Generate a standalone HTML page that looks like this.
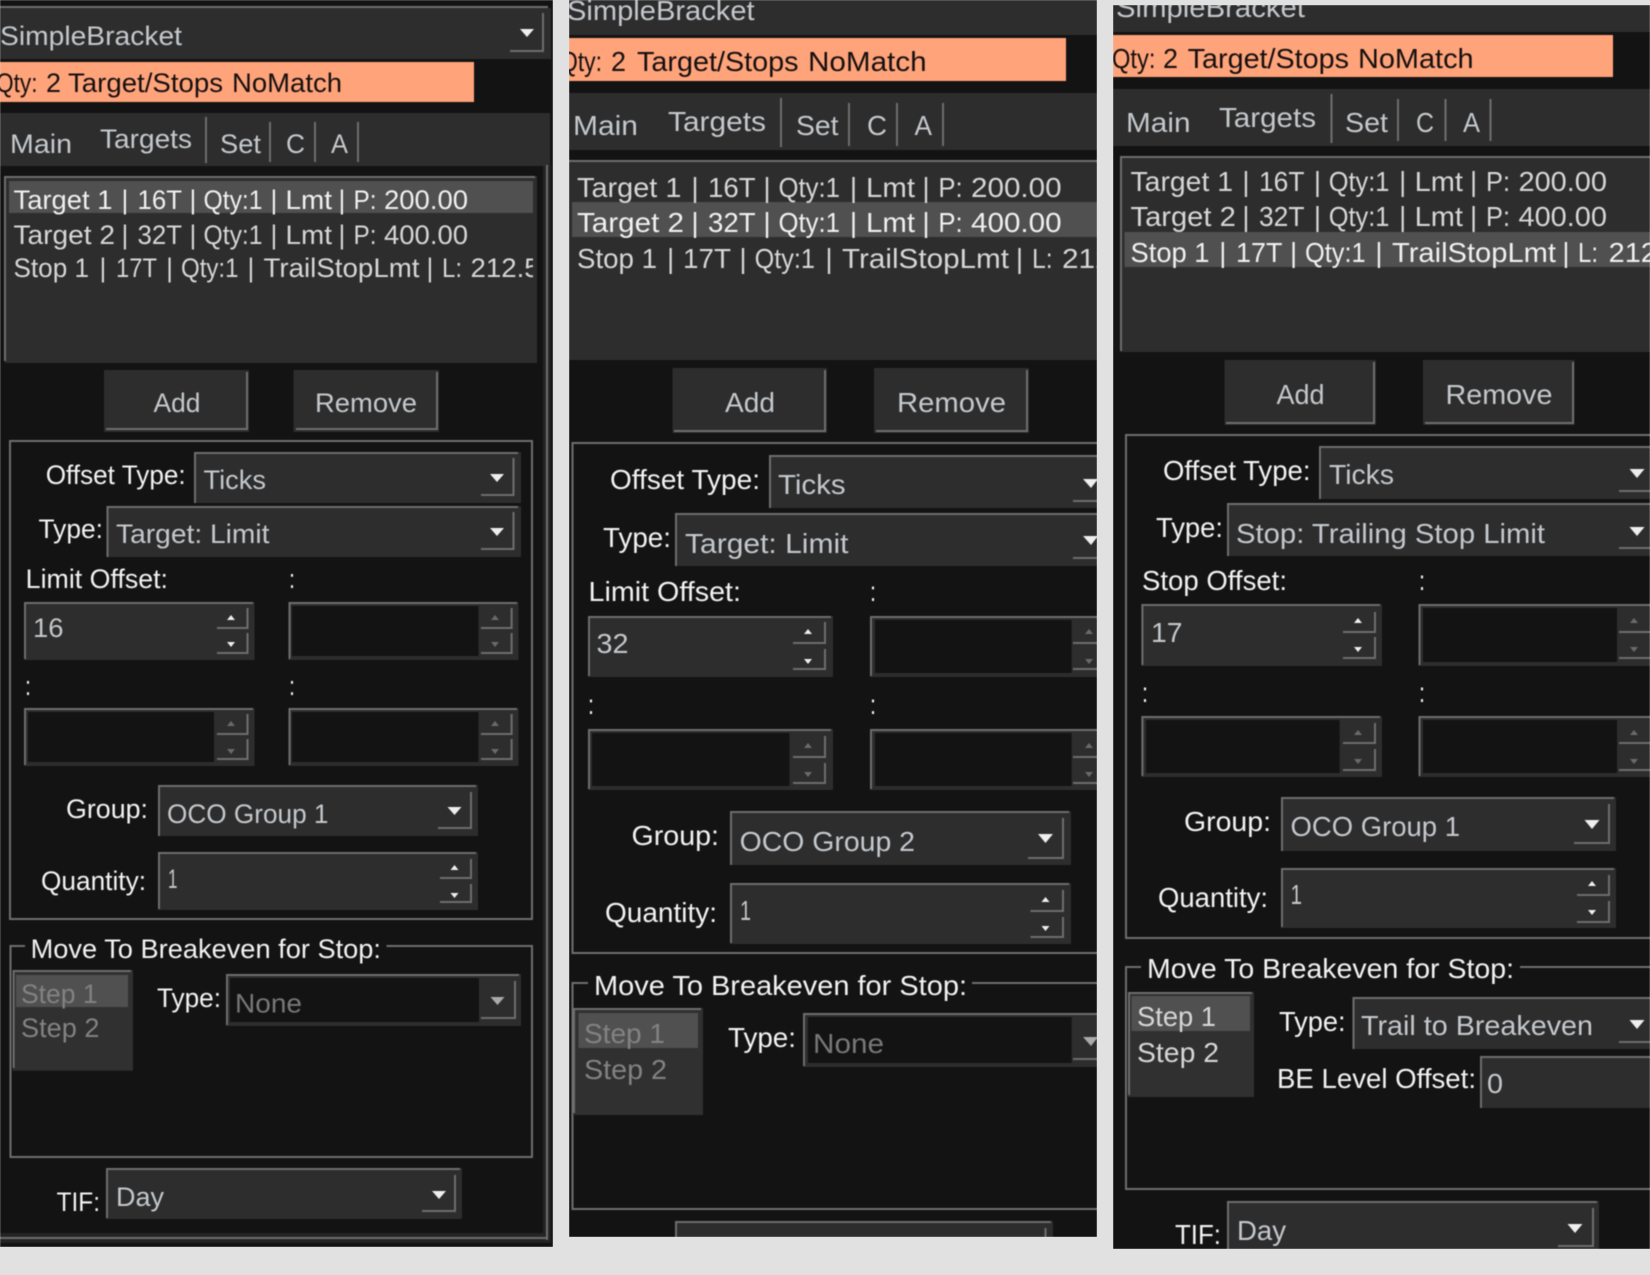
<!DOCTYPE html>
<html><head><meta charset="utf-8"><style>
html,body{margin:0;padding:0;background:#e1e1e1;width:1650px;height:1275px;overflow:hidden}
svg{display:block;position:absolute;left:0;top:0}
text{font-family:"Liberation Sans",sans-serif;fill:#f2f2f2}
.bl{filter:blur(.5px)}
.b{fill:#2d2d2d}.d{fill:#131313}.s{fill:#505050}.o{fill:#ffa37a}
.l{stroke:#6e6e6e;stroke-width:2;fill:none}
.t{fill:#eee}.g{fill:#aaa}.h{fill:#6a6a6a}
.lst text{fill:#d6d6d6}
.lst .e text{fill:#f0f0f0}
.lst .p{text-anchor:middle}
text.k{fill:#151010}
text.m{fill:#c4c8cc}
</style></head><body>
<svg width="1650" height="1275" viewBox="0 0 1650 1275" xmlns="http://www.w3.org/2000/svg">
<defs>
<clipPath id="c1"><rect x="0" y="0" width="553" height="1247"/></clipPath>
<clipPath id="c2"><rect x="569" y="0" width="528" height="1237"/></clipPath>
<clipPath id="c3"><rect x="1113" y="5" width="537" height="1244"/></clipPath>
<clipPath id="r1"><rect x="9" y="176" width="524" height="190"/></clipPath>
</defs>

<!-- PANEL 1 -->
<g clip-path="url(#c1)"><g class="bl" font-size="26.5">
<rect class="d" x="0" y="0" width="553" height="1247"/>
<rect x="543" y="165" width="8" height="1078" fill="#242424"/>
<rect x="0" y="1233" width="551" height="10" fill="#242424"/>
<rect class="d" x="0" y="1233" width="0" height="0"/>
<rect class="b" x="0" y="8" width="551" height="51"/>
<path class="l" d="M0 7H548"/>
<path class="l" d="M510 51H543V13"/><path class="t" d="M520 29H534L527 37Z"/>
<text class="m" x="0" y="45" textLength="182" lengthAdjust="spacingAndGlyphs">SimpleBracket</text>
<rect class="o" x="0" y="62" width="474" height="40"/>
<text class="k" x="-4" y="92" textLength="41.5" lengthAdjust="spacingAndGlyphs">Qty:</text>
<text class="k" x="46" y="92" textLength="15" lengthAdjust="spacingAndGlyphs">2</text>
<text class="k" x="68" y="92" textLength="155" lengthAdjust="spacingAndGlyphs">Target/Stops</text>
<text class="k" x="232" y="92" textLength="110" lengthAdjust="spacingAndGlyphs">NoMatch</text>
<rect class="b" x="0" y="113" width="550" height="53"/>
<path class="l" d="M547 165V1240M0 1238H547M206 117V163M270 122V162M315 122V162M358 122V162"/>
<text class="m" x="10" y="153" textLength="62" lengthAdjust="spacingAndGlyphs">Main</text>
<text class="m" x="100" y="148" textLength="92" lengthAdjust="spacingAndGlyphs">Targets</text>
<text class="m" x="220" y="153" textLength="41" lengthAdjust="spacingAndGlyphs">Set</text>
<text class="m" x="286" y="153" textLength="19" lengthAdjust="spacingAndGlyphs">C</text>
<text class="m" x="331" y="153" textLength="17" lengthAdjust="spacingAndGlyphs">A</text>
<rect class="b" x="5" y="176" width="532" height="187"/>
<path class="l" d="M5 361V177H535"/>
<rect class="s" x="9" y="181" width="524" height="32"/>
<g class="lst">
<g class="e"><text x="13.5" y="209" textLength="99" lengthAdjust="spacingAndGlyphs">Target 1</text>
<text class="p" x="125" y="209">|</text>
<text x="137.5" y="209" textLength="44.5" lengthAdjust="spacingAndGlyphs">16T</text>
<text class="p" x="193" y="209">|</text>
<text x="203.5" y="209" textLength="59" lengthAdjust="spacingAndGlyphs">Qty:1</text>
<text class="p" x="274" y="209">|</text>
<text x="285.5" y="209" textLength="46.5" lengthAdjust="spacingAndGlyphs">Lmt</text>
<text class="p" x="342" y="209">|</text>
<text x="353.5" y="209" textLength="23" lengthAdjust="spacingAndGlyphs">P:</text>
<text x="384" y="209" textLength="84" lengthAdjust="spacingAndGlyphs">200.00</text></g>
<text x="13.5" y="244" textLength="101.5" lengthAdjust="spacingAndGlyphs">Target 2</text>
<text class="p" x="125" y="244">|</text>
<text x="137.5" y="244" textLength="44.5" lengthAdjust="spacingAndGlyphs">32T</text>
<text class="p" x="193" y="244">|</text>
<text x="203.5" y="244" textLength="59" lengthAdjust="spacingAndGlyphs">Qty:1</text>
<text class="p" x="274" y="244">|</text>
<text x="285.5" y="244" textLength="46.5" lengthAdjust="spacingAndGlyphs">Lmt</text>
<text class="p" x="342" y="244">|</text>
<text x="353.5" y="244" textLength="23" lengthAdjust="spacingAndGlyphs">P:</text>
<text x="384" y="244" textLength="84" lengthAdjust="spacingAndGlyphs">400.00</text>
<text x="13.5" y="277" textLength="75.5" lengthAdjust="spacingAndGlyphs">Stop 1</text>
<text class="p" x="103" y="277">|</text>
<text x="116" y="277" textLength="41" lengthAdjust="spacingAndGlyphs">17T</text>
<text class="p" x="169.6" y="277">|</text>
<text x="181" y="277" textLength="57.5" lengthAdjust="spacingAndGlyphs">Qty:1</text>
<text class="p" x="251" y="277">|</text>
<text x="263.5" y="277" textLength="156" lengthAdjust="spacingAndGlyphs">TrailStopLmt</text>
<text class="p" x="430" y="277">|</text>
<text x="442" y="277" textLength="20" lengthAdjust="spacingAndGlyphs">L:</text>
<text x="470.5" y="277" textLength="84.5" lengthAdjust="spacingAndGlyphs" clip-path="url(#r1)">212.50</text>
</g>
<rect class="b" x="104" y="370" width="145" height="62"/><path class="l" d="M106 429H247V372"/>
<text class="m" x="153.5" y="412" textLength="47" lengthAdjust="spacingAndGlyphs">Add</text>
<rect class="b" x="293.5" y="370" width="145.5" height="62"/><path class="l" d="M296 429H437V372"/>
<text class="m" x="315" y="412" textLength="102" lengthAdjust="spacingAndGlyphs">Remove</text>
<rect class="l" x="10" y="441" width="522" height="478"/>
<text x="45.7" y="484" textLength="140" lengthAdjust="spacingAndGlyphs">Offset Type:</text>
<rect class="b" x="194" y="452" width="327" height="51"/><path class="l" d="M195 503V453H518"/>
<path class="l" d="M481 495H513.5V458"/><path class="t" d="M490 474H504L497 482Z"/>
<text class="m" x="203.5" y="489" textLength="62.5" lengthAdjust="spacingAndGlyphs">Ticks</text>
<text x="38.5" y="538" textLength="64.5" lengthAdjust="spacingAndGlyphs">Type:</text>
<rect class="b" x="106.5" y="506" width="414.5" height="51"/><path class="l" d="M107.5 557V507H518"/>
<path class="l" d="M481 549H513.5V512"/><path class="t" d="M490 528H504L497 536Z"/>
<text class="m" x="116" y="543" textLength="153.5" lengthAdjust="spacingAndGlyphs">Target: Limit</text>
<text x="25.7" y="588" textLength="142.3" lengthAdjust="spacingAndGlyphs">Limit Offset:</text>
<text x="289" y="588" textLength="6" lengthAdjust="spacingAndGlyphs">:</text>
<rect class="b" x="24" y="602" width="230.5" height="58"/><path class="l" d="M25 659V603H253"/>
<text class="m" x="33" y="637" textLength="30.5" lengthAdjust="spacingAndGlyphs">16</text>
<path class="l" d="M217 628H247.5V608M217 653H247.5V633"/>
<path class="t" d="M227 620H235L231 615ZM227 642H235L231 647Z"/>
<rect class="b" x="288.5" y="602" width="230" height="58"/><rect class="d" x="292" y="606" width="186.5" height="50"/>
<path class="l" d="M289.5 659V603H517M481 628H511.6V608M481 653H511.6V633"/>
<path class="h" d="M491 620H499L495 615ZM491 642H499L495 647Z"/>
<text x="25" y="695" textLength="6" lengthAdjust="spacingAndGlyphs">:</text>
<text x="289" y="695" textLength="6" lengthAdjust="spacingAndGlyphs">:</text>
<rect class="b" x="24" y="708" width="230.5" height="58"/><rect class="d" x="28" y="712" width="186" height="50"/>
<path class="l" d="M25 765V709H253M217 734H247.5V714M217 759H247.5V739"/>
<path class="h" d="M227 726H235L231 721ZM227 749H235L231 754Z"/>
<rect class="b" x="288.5" y="708" width="230" height="58"/><rect class="d" x="292" y="712" width="186.5" height="50"/>
<path class="l" d="M289.5 765V709H517M481 734H511.6V714M481 759H511.6V739"/>
<path class="h" d="M491 726H499L495 721ZM491 749H499L495 754Z"/>
<text x="66" y="818" textLength="82" lengthAdjust="spacingAndGlyphs">Group:</text>
<rect class="b" x="158" y="785" width="320" height="51"/><path class="l" d="M159 836V786H476M438 828H471V792"/>
<path class="t" d="M447.5 807H461.5L454.5 815Z"/>
<text class="m" x="167" y="823" textLength="161.5" lengthAdjust="spacingAndGlyphs">OCO Group 1</text>
<text x="41" y="890" textLength="105" lengthAdjust="spacingAndGlyphs">Quantity:</text>
<rect class="b" x="158" y="852" width="320" height="58"/><path class="l" d="M159 909V853H476M440 878H471V859M440 902H471V884"/>
<path class="t" d="M450.5 870H458.5L454.5 865ZM450.5 893H458.5L454.5 898Z"/>
<text class="m" x="168" y="888" textLength="9.5" lengthAdjust="spacingAndGlyphs">1</text>
<path class="l" d="M25 946H10.5V1157H532V946H386.5"/>
<text x="30.6" y="958" textLength="350.4" lengthAdjust="spacingAndGlyphs">Move To Breakeven for Stop:</text>
<rect x="12.6" y="970" width="120.4" height="100.7" fill="#303030"/><path class="l" d="M13.6 1068V971H131"/>
<rect class="s" x="16" y="975" width="112" height="32"/>
<text x="21" y="1003" textLength="76.6" lengthAdjust="spacingAndGlyphs" style="fill:#828282">Step 1</text>
<text x="21" y="1037" textLength="78.5" lengthAdjust="spacingAndGlyphs" style="fill:#828282">Step 2</text>
<text x="157" y="1007" textLength="64" lengthAdjust="spacingAndGlyphs">Type:</text>
<rect class="b" x="226" y="974" width="295" height="52"/><rect class="d" x="230" y="978" width="249" height="44"/>
<path class="l" d="M227 1025V975H519M481 1018H515V981"/><path class="g" d="M490.5 997H504.5L497.5 1005Z"/>
<text x="235" y="1012.5" textLength="67" lengthAdjust="spacingAndGlyphs" style="fill:#777">None</text>
<text x="56.6" y="1211" textLength="43.4" lengthAdjust="spacingAndGlyphs">TIF:</text>
<rect class="b" x="106" y="1168" width="356" height="51"/><path class="l" d="M107 1218V1169H460M422 1211H455V1175"/>
<path class="t" d="M432 1191H446L439 1199Z"/>
<text class="m" x="116" y="1206" textLength="48" lengthAdjust="spacingAndGlyphs">Day</text>
</g></g>

<!-- PANEL 2 -->
<g clip-path="url(#c2)"><g class="bl" font-size="28">
<rect class="d" x="569" y="0" width="528" height="1237"/>
<rect class="b" x="569" y="0" width="528" height="35"/>
<text class="m" x="567" y="20" textLength="187.6" lengthAdjust="spacingAndGlyphs">SimpleBracket</text>
<rect class="o" x="569" y="38" width="497" height="43"/>
<text class="k" x="560" y="71" textLength="42" lengthAdjust="spacingAndGlyphs">Qty:</text>
<text class="k" x="611" y="71" textLength="15" lengthAdjust="spacingAndGlyphs">2</text>
<text class="k" x="637" y="71" textLength="161.5" lengthAdjust="spacingAndGlyphs">Target/Stops</text>
<text class="k" x="808" y="71" textLength="118.6" lengthAdjust="spacingAndGlyphs">NoMatch</text>
<rect class="b" x="569" y="93" width="528" height="57"/>
<path class="l" d="M781 98V147M849 103V146M897 103V146M943 103V146"/>
<text class="m" x="573" y="135" textLength="65" lengthAdjust="spacingAndGlyphs">Main</text>
<text class="m" x="668" y="131" textLength="98" lengthAdjust="spacingAndGlyphs">Targets</text>
<text class="m" x="796" y="135" textLength="42.5" lengthAdjust="spacingAndGlyphs">Set</text>
<text class="m" x="867" y="135" textLength="20" lengthAdjust="spacingAndGlyphs">C</text>
<text class="m" x="914.5" y="135" textLength="17.5" lengthAdjust="spacingAndGlyphs">A</text>
<rect class="b" x="569" y="161" width="528" height="199"/><path class="l" d="M569 161H1097"/>
<rect class="s" x="572" y="202" width="525" height="35"/>
<g class="lst">
<text x="577" y="197" textLength="104.4" lengthAdjust="spacingAndGlyphs">Target 1</text>
<text class="p" x="695" y="197">|</text>
<text x="708" y="197" textLength="47.6" lengthAdjust="spacingAndGlyphs">16T</text>
<text class="p" x="767" y="197">|</text>
<text x="778.5" y="197" textLength="61.5" lengthAdjust="spacingAndGlyphs">Qty:1</text>
<text class="p" x="853.5" y="197">|</text>
<text x="866" y="197" textLength="49" lengthAdjust="spacingAndGlyphs">Lmt</text>
<text class="p" x="926" y="197">|</text>
<text x="938.4" y="197" textLength="24.3" lengthAdjust="spacingAndGlyphs">P:</text>
<text x="971" y="197" textLength="90.6" lengthAdjust="spacingAndGlyphs">200.00</text>
<g class="e"><text x="577" y="232" textLength="107" lengthAdjust="spacingAndGlyphs">Target 2</text>
<text class="p" x="695" y="232">|</text>
<text x="708" y="232" textLength="47.6" lengthAdjust="spacingAndGlyphs">32T</text>
<text class="p" x="767" y="232">|</text>
<text x="778.5" y="232" textLength="61.5" lengthAdjust="spacingAndGlyphs">Qty:1</text>
<text class="p" x="853.5" y="232">|</text>
<text x="866" y="232" textLength="49" lengthAdjust="spacingAndGlyphs">Lmt</text>
<text class="p" x="926" y="232">|</text>
<text x="938.4" y="232" textLength="24.3" lengthAdjust="spacingAndGlyphs">P:</text>
<text x="971" y="232" textLength="90.6" lengthAdjust="spacingAndGlyphs">400.00</text></g>
<text x="577" y="268" textLength="80" lengthAdjust="spacingAndGlyphs">Stop 1</text>
<text class="p" x="670.7" y="268">|</text>
<text x="683" y="268" textLength="48" lengthAdjust="spacingAndGlyphs">17T</text>
<text class="p" x="743" y="268">|</text>
<text x="754.6" y="268" textLength="60.4" lengthAdjust="spacingAndGlyphs">Qty:1</text>
<text class="p" x="829" y="268">|</text>
<text x="842" y="268" textLength="167" lengthAdjust="spacingAndGlyphs">TrailStopLmt</text>
<text class="p" x="1019.5" y="268">|</text>
<text x="1032" y="268" textLength="20.7" lengthAdjust="spacingAndGlyphs">L:</text>
<text x="1062" y="268" textLength="91" lengthAdjust="spacingAndGlyphs">212.50</text>
</g>
<rect class="b" x="672.5" y="368" width="154.5" height="65"/><path class="l" d="M674 431H825V370"/>
<text class="m" x="725" y="412" textLength="50" lengthAdjust="spacingAndGlyphs">Add</text>
<rect class="b" x="874" y="368" width="155" height="65"/><path class="l" d="M876 431H1027V370"/>
<text class="m" x="897" y="412" textLength="109" lengthAdjust="spacingAndGlyphs">Remove</text>
<path class="l" d="M1097 443H572.5V953H1097"/>
<text x="610" y="489" textLength="150" lengthAdjust="spacingAndGlyphs">Offset Type:</text>
<rect class="b" x="769" y="455" width="328" height="53"/><path class="l" d="M770 508V456H1097M1073 501H1097"/>
<path class="t" d="M1083 479H1098L1091 488Z"/>
<text class="m" x="778" y="494" textLength="67.6" lengthAdjust="spacingAndGlyphs">Ticks</text>
<text x="603" y="547" textLength="68" lengthAdjust="spacingAndGlyphs">Type:</text>
<rect class="b" x="675" y="513" width="422" height="53"/><path class="l" d="M676 566V514H1097M1073 558H1097"/>
<path class="t" d="M1083 536H1098L1091 545Z"/>
<text class="m" x="685" y="553" textLength="163.5" lengthAdjust="spacingAndGlyphs">Target: Limit</text>
<text x="588.5" y="601" textLength="152.5" lengthAdjust="spacingAndGlyphs">Limit Offset:</text>
<text x="870" y="601" textLength="6" lengthAdjust="spacingAndGlyphs">:</text>
<rect class="b" x="588" y="616" width="245" height="61"/><path class="l" d="M589 676V617H831M793 643H825V622M793 669H825V649"/>
<path class="t" d="M804 634H812L808 629ZM804 659H812L808 664Z"/>
<text class="m" x="596.5" y="653" textLength="32" lengthAdjust="spacingAndGlyphs">32</text>
<rect class="b" x="870" y="616" width="227" height="61"/><rect class="d" x="875" y="620" width="196.6" height="53"/>
<path class="l" d="M871 676V617H1097M1073 643H1097M1073 669H1097"/>
<path class="h" d="M1085 634H1093L1089 629ZM1085 659H1093L1089 664Z"/>
<text x="588" y="714" textLength="6" lengthAdjust="spacingAndGlyphs">:</text>
<text x="870" y="714" textLength="6" lengthAdjust="spacingAndGlyphs">:</text>
<rect class="b" x="588" y="729" width="245" height="61"/><rect class="d" x="592" y="733" width="197.5" height="53"/>
<path class="l" d="M589 789V730H831M793 757H825V736M793 783H825V763"/>
<path class="h" d="M804 748H812L808 743ZM804 772H812L808 777Z"/>
<rect class="b" x="870" y="729" width="227" height="61"/><rect class="d" x="875" y="733" width="196.6" height="53"/>
<path class="l" d="M871 789V730H1097M1073 757H1097M1073 783H1097"/>
<path class="h" d="M1085 748H1093L1089 743ZM1085 772H1093L1089 777Z"/>
<text x="631.5" y="845" textLength="87.5" lengthAdjust="spacingAndGlyphs">Group:</text>
<rect class="b" x="730" y="811" width="341" height="54"/><path class="l" d="M731 865V812H1069M1028 858H1063V818"/>
<path class="t" d="M1038 834H1053L1045.5 843Z"/>
<text class="m" x="739.6" y="851" textLength="175.4" lengthAdjust="spacingAndGlyphs">OCO Group 2</text>
<text x="605" y="922" textLength="112" lengthAdjust="spacingAndGlyphs">Quantity:</text>
<rect class="b" x="730" y="883" width="341" height="61"/><path class="l" d="M731 943V884H1069M1030.5 911H1063V890M1030.5 937H1063V917"/>
<path class="t" d="M1041.5 902H1049.5L1045.5 897ZM1041.5 926H1049.5L1045.5 931Z"/>
<text class="m" x="740" y="920" textLength="11" lengthAdjust="spacingAndGlyphs">1</text>
<path class="l" d="M588 983H572.5V1209H1097M972 983H1097"/>
<text x="594" y="995" textLength="373" lengthAdjust="spacingAndGlyphs">Move To Breakeven for Stop:</text>
<rect x="573" y="1008" width="130" height="107" fill="#303030"/><path class="l" d="M574 1113V1009H701"/>
<rect class="s" x="578.5" y="1013" width="119.5" height="35"/>
<text x="584" y="1043" textLength="81" lengthAdjust="spacingAndGlyphs" style="fill:#828282">Step 1</text>
<text x="584" y="1079" textLength="83" lengthAdjust="spacingAndGlyphs" style="fill:#828282">Step 2</text>
<text x="728" y="1047" textLength="68" lengthAdjust="spacingAndGlyphs">Type:</text>
<rect class="b" x="803" y="1013" width="294" height="54"/><rect class="d" x="808" y="1017" width="263.6" height="46"/>
<path class="l" d="M804 1066V1014H1097M1073 1059H1097"/><path class="g" d="M1083 1037H1098L1091 1046Z"/>
<text x="813" y="1053" textLength="71" lengthAdjust="spacingAndGlyphs" style="fill:#777">None</text>
<rect class="b" x="675" y="1221" width="378" height="16"/><path class="l" d="M676 1237V1222H1051M1045.5 1228V1237"/>
</g></g>

<!-- PANEL 3 -->
<g clip-path="url(#c3)"><g class="bl" font-size="27.5">
<rect class="d" x="1113" y="5" width="537" height="1244"/>
<rect class="b" x="1113" y="5" width="537" height="27"/>
<text class="m" x="1116" y="17" textLength="189" lengthAdjust="spacingAndGlyphs">SimpleBracket</text>
<rect class="o" x="1113" y="35" width="500" height="42"/>
<text class="k" x="1112" y="68" textLength="43.4" lengthAdjust="spacingAndGlyphs">Qty:</text>
<text class="k" x="1163" y="68" textLength="15" lengthAdjust="spacingAndGlyphs">2</text>
<text class="k" x="1187.7" y="68" textLength="161.3" lengthAdjust="spacingAndGlyphs">Target/Stops</text>
<text class="k" x="1358" y="68" textLength="115.6" lengthAdjust="spacingAndGlyphs">NoMatch</text>
<rect class="b" x="1113" y="89" width="537" height="57"/>
<path class="l" d="M1331.5 94V143M1398 99V141M1445.5 99V141M1490.5 99V141"/>
<text class="m" x="1126" y="132" textLength="64.5" lengthAdjust="spacingAndGlyphs">Main</text>
<text class="m" x="1219" y="127" textLength="97" lengthAdjust="spacingAndGlyphs">Targets</text>
<text class="m" x="1345" y="132" textLength="43" lengthAdjust="spacingAndGlyphs">Set</text>
<text class="m" x="1416" y="132" textLength="18" lengthAdjust="spacingAndGlyphs">C</text>
<text class="m" x="1463" y="132" textLength="17" lengthAdjust="spacingAndGlyphs">A</text>
<rect class="b" x="1120" y="156" width="530" height="196"/><path class="l" d="M1121 351V157H1650"/>
<rect class="s" x="1124.5" y="232" width="525.5" height="35"/>
<g class="lst">
<text x="1130.5" y="191" textLength="102.5" lengthAdjust="spacingAndGlyphs">Target 1</text>
<text class="p" x="1246" y="191">|</text>
<text x="1259" y="191" textLength="45.5" lengthAdjust="spacingAndGlyphs">16T</text>
<text class="p" x="1317.5" y="191">|</text>
<text x="1328.7" y="191" textLength="60.7" lengthAdjust="spacingAndGlyphs">Qty:1</text>
<text class="p" x="1402.7" y="191">|</text>
<text x="1414.7" y="191" textLength="48.3" lengthAdjust="spacingAndGlyphs">Lmt</text>
<text class="p" x="1473.6" y="191">|</text>
<text x="1486" y="191" textLength="24" lengthAdjust="spacingAndGlyphs">P:</text>
<text x="1518.5" y="191" textLength="88.5" lengthAdjust="spacingAndGlyphs">200.00</text>
<text x="1130.5" y="226" textLength="105.3" lengthAdjust="spacingAndGlyphs">Target 2</text>
<text class="p" x="1246" y="226">|</text>
<text x="1259" y="226" textLength="45.5" lengthAdjust="spacingAndGlyphs">32T</text>
<text class="p" x="1317.5" y="226">|</text>
<text x="1328.7" y="226" textLength="60.7" lengthAdjust="spacingAndGlyphs">Qty:1</text>
<text class="p" x="1402.7" y="226">|</text>
<text x="1414.7" y="226" textLength="48.3" lengthAdjust="spacingAndGlyphs">Lmt</text>
<text class="p" x="1473.6" y="226">|</text>
<text x="1486" y="226" textLength="24" lengthAdjust="spacingAndGlyphs">P:</text>
<text x="1518.5" y="226" textLength="88.5" lengthAdjust="spacingAndGlyphs">400.00</text>
<g class="e"><text x="1130.5" y="262" textLength="79" lengthAdjust="spacingAndGlyphs">Stop 1</text>
<text class="p" x="1222.8" y="262">|</text>
<text x="1236" y="262" textLength="46.4" lengthAdjust="spacingAndGlyphs">17T</text>
<text class="p" x="1293.6" y="262">|</text>
<text x="1305" y="262" textLength="60.6" lengthAdjust="spacingAndGlyphs">Qty:1</text>
<text class="p" x="1379" y="262">|</text>
<text x="1392" y="262" textLength="164" lengthAdjust="spacingAndGlyphs">TrailStopLmt</text>
<text class="p" x="1566" y="262">|</text>
<text x="1578" y="262" textLength="20" lengthAdjust="spacingAndGlyphs">L:</text>
<text x="1608.7" y="262" textLength="88.3" lengthAdjust="spacingAndGlyphs">212.50</text></g>
</g>
<rect class="b" x="1224.5" y="360" width="151.5" height="65"/><path class="l" d="M1226 423H1374V362"/>
<text class="m" x="1276.5" y="404" textLength="48" lengthAdjust="spacingAndGlyphs">Add</text>
<rect class="b" x="1423" y="360" width="151.6" height="65"/><path class="l" d="M1425 423H1573V362"/>
<text class="m" x="1445.5" y="404" textLength="107" lengthAdjust="spacingAndGlyphs">Remove</text>
<path class="l" d="M1650 435H1126V938H1650"/>
<text x="1163" y="480" textLength="147.5" lengthAdjust="spacingAndGlyphs">Offset Type:</text>
<rect class="b" x="1319" y="446" width="331" height="53"/><path class="l" d="M1320 499V447H1650M1619 491H1650"/>
<path class="t" d="M1629.5 469H1644.5L1637 478Z"/>
<text class="m" x="1329" y="484" textLength="65" lengthAdjust="spacingAndGlyphs">Ticks</text>
<text x="1156" y="537" textLength="67" lengthAdjust="spacingAndGlyphs">Type:</text>
<rect class="b" x="1227" y="503" width="423" height="53"/><path class="l" d="M1228 556V504H1650M1619 548H1650"/>
<path class="t" d="M1629.5 527H1644.5L1637 536Z"/>
<text class="m" x="1236" y="543" textLength="309" lengthAdjust="spacingAndGlyphs">Stop: Trailing Stop Limit</text>
<text x="1142" y="590" textLength="145" lengthAdjust="spacingAndGlyphs">Stop Offset:</text>
<text x="1419" y="590" textLength="6" lengthAdjust="spacingAndGlyphs">:</text>
<rect class="b" x="1141.4" y="604" width="240.6" height="62"/><path class="l" d="M1142.4 665V605H1380M1343 632H1375V612M1343 658H1375V637"/>
<path class="t" d="M1354 623H1362L1358 618ZM1354 647H1362L1358 652Z"/>
<text class="m" x="1151" y="642" textLength="31.5" lengthAdjust="spacingAndGlyphs">17</text>
<rect class="b" x="1418.5" y="604" width="231.5" height="62"/><rect class="d" x="1423" y="608" width="194" height="54"/>
<path class="l" d="M1419.5 665V605H1650M1619 632H1650M1619 658H1650"/>
<path class="h" d="M1630 623H1638L1634 618ZM1630 647H1638L1634 652Z"/>
<text x="1142" y="702" textLength="6" lengthAdjust="spacingAndGlyphs">:</text>
<text x="1419" y="702" textLength="6" lengthAdjust="spacingAndGlyphs">:</text>
<rect class="b" x="1141.4" y="716" width="240.6" height="61"/><rect class="d" x="1146" y="720" width="193.6" height="53"/>
<path class="l" d="M1142.4 776V717H1380M1343 743H1375V723M1343 770H1375V749"/>
<path class="h" d="M1354 735H1362L1358 730ZM1354 759H1362L1358 764Z"/>
<rect class="b" x="1418.5" y="716" width="231.5" height="61"/><rect class="d" x="1423" y="720" width="194" height="53"/>
<path class="l" d="M1419.5 776V717H1650M1619 743H1650M1619 770H1650"/>
<path class="h" d="M1630 735H1638L1634 730ZM1630 759H1638L1634 764Z"/>
<text x="1184" y="831" textLength="87" lengthAdjust="spacingAndGlyphs">Group:</text>
<rect class="b" x="1281" y="797" width="335" height="54"/><path class="l" d="M1282 851V798H1614M1574 843H1609V804"/>
<path class="t" d="M1584.5 820H1599.5L1592 829Z"/>
<text class="m" x="1290.5" y="836" textLength="169.5" lengthAdjust="spacingAndGlyphs">OCO Group 1</text>
<text x="1158" y="907" textLength="110" lengthAdjust="spacingAndGlyphs">Quantity:</text>
<rect class="b" x="1281" y="868" width="335" height="60"/><path class="l" d="M1282 927V869H1614M1577 895H1609V875M1577 922H1609V901"/>
<path class="t" d="M1588 886H1596L1592 881ZM1588 910H1596L1592 915Z"/>
<text class="m" x="1290.5" y="904" textLength="11.5" lengthAdjust="spacingAndGlyphs">1</text>
<path class="l" d="M1141 967H1126V1189H1650M1520 967H1650"/>
<text x="1147" y="978" textLength="367" lengthAdjust="spacingAndGlyphs">Move To Breakeven for Stop:</text>
<rect x="1128" y="992" width="126" height="105" fill="#303030"/><path class="l" d="M1129 1095V993H1252"/>
<rect class="s" x="1131.5" y="996" width="118.5" height="35"/>
<text x="1137" y="1026" textLength="79" lengthAdjust="spacingAndGlyphs" style="fill:#d6d6d6">Step 1</text>
<text x="1137" y="1062" textLength="82" lengthAdjust="spacingAndGlyphs" style="fill:#d6d6d6">Step 2</text>
<text x="1279" y="1031" textLength="66.5" lengthAdjust="spacingAndGlyphs">Type:</text>
<rect class="b" x="1352.5" y="997" width="297.5" height="52"/><path class="l" d="M1353.5 1049V998H1650M1619 1042H1650"/>
<path class="t" d="M1629.5 1020H1644.5L1637 1029Z"/>
<text class="m" x="1361" y="1035" textLength="232" lengthAdjust="spacingAndGlyphs">Trail to Breakeven</text>
<text x="1277" y="1088" textLength="199" lengthAdjust="spacingAndGlyphs">BE Level Offset:</text>
<rect class="b" x="1480" y="1056" width="170" height="52"/><path class="l" d="M1481 1108V1057H1650"/>
<text class="m" x="1487" y="1093" textLength="16" lengthAdjust="spacingAndGlyphs">0</text>
<text x="1175" y="1244" textLength="46" lengthAdjust="spacingAndGlyphs">TIF:</text>
<rect class="b" x="1227" y="1201" width="372" height="48"/><path class="l" d="M1228 1249V1202H1597M1558 1246H1593V1208"/>
<path class="t" d="M1567.5 1224H1582.5L1575 1233Z"/>
<text class="m" x="1237" y="1240" textLength="49" lengthAdjust="spacingAndGlyphs">Day</text>
</g></g>
</svg>
</body></html>
